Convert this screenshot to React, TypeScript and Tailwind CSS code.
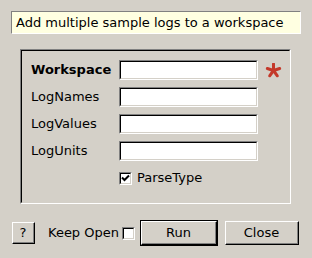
import React from "react";

const font = { fontFamily: '"DejaVu Sans", sans-serif' };

function Sunken({ w, h, children }: { w: number; h: number; children?: React.ReactNode }) {
  return (
    <div
      className="border-t border-l border-t-[#808080] border-l-[#808080] border-b border-r border-b-white border-r-white box-border"
      style={{ width: w, height: h }}
    >
      <div className="w-full h-full border-t border-l border-t-black border-l-black border-b border-r border-b-[#d4d0c8] border-r-[#d4d0c8] bg-white box-border">
        {children}
      </div>
    </div>
  );
}

function CheckBox({ checked }: { checked?: boolean }) {
  return (
    <div className="w-[13px] h-[13px] border-t border-l border-t-[#808080] border-l-[#808080] border-b border-r border-b-white border-r-white box-border">
      <div className="w-full h-full border-t border-l border-t-black border-l-black border-b border-r border-b-[#d4d0c8] border-r-[#d4d0c8] bg-white box-border flex items-center justify-center">
        {checked && (
          <svg width="9" height="9" viewBox="0 0 9 9">
            <path d="M1 3.5 L3.5 6 L8 1.5" stroke="black" strokeWidth="2" fill="none" />
          </svg>
        )}
      </div>
    </div>
  );
}

function Button({ w, h, children, def }: { w: number; h: number; children: React.ReactNode; def?: boolean }) {
  const inner = (
    <div className="w-full h-full border-t border-l border-t-white border-l-white border-b border-r border-b-black border-r-black box-border">
      <div className="w-full h-full border-b border-r border-b-[#808080] border-r-[#808080] box-border flex items-center justify-center text-[13px] text-black">
        {children}
      </div>
    </div>
  );
  if (def) {
    return (
      <div className="border border-black box-border" style={{ width: w, height: h }}>
        {inner}
      </div>
    );
  }
  return <div style={{ width: w, height: h }}>{inner}</div>;
}

function Star() {
  const cx = 8.5;
  const cy = 7.5;
  const r = 6.5;
  const angles = [-90, -18, 54, 126, 198];
  return (
    <svg width="17" height="15" viewBox="0 0 17 15">
      {angles.map((a) => {
        const rad = (a * Math.PI) / 180;
        return (
          <line
            key={a}
            x1={cx}
            y1={cy}
            x2={cx + r * Math.cos(rad)}
            y2={cy + r * Math.sin(rad)}
            stroke="#c4392a"
            strokeWidth="3"
            strokeLinecap="round"
          />
        );
      })}
    </svg>
  );
}

export default function App() {
  const rows: { label: string; bold?: boolean; star?: boolean }[] = [
    { label: "Workspace", bold: true, star: true },
    { label: "LogNames" },
    { label: "LogValues" },
    { label: "LogUnits" },
  ];
  return (
    <div className="w-[312px] h-[258px] bg-[#d4d0c8] overflow-hidden text-[13px] text-black" style={font}>
      <div className="pt-[11px] px-[11px]">
        <div className="h-[23px] bg-[#ffffe1] border-t border-l border-t-[#808080] border-l-[#808080] border-r border-b border-r-white border-b-white box-border flex items-center pl-[4px]">
          Add multiple sample logs to a workspace
        </div>
      </div>
      <div className="mt-[15px] ml-[20px] w-[271px] h-[155px] border-t border-l border-t-[#808080] border-l-[#808080] border-b border-r border-b-white border-r-white box-border">
        <div className="w-full h-full border-t border-l border-t-black border-l-black border-b border-r border-b-[#d4d0c8] border-r-[#d4d0c8] box-border pt-[9px] pl-[9px] flex flex-col gap-[7px]">
          {rows.map((r) => (
            <div key={r.label} className="flex items-center h-[20px]">
              <div className={"w-[88px] " + (r.bold ? "font-bold" : "")}>{r.label}</div>
              <Sunken w={139} h={20} />
              {r.star && (
                <div className="ml-[7px] mt-[1px]">
                  <Star />
                </div>
              )}
            </div>
          ))}
          <div className="flex items-center h-[20px] pl-[88px]">
            <CheckBox checked />
            <span className="ml-[5px]">ParseType</span>
          </div>
        </div>
      </div>
      <div className="flex items-center mt-[16px] pl-[12px] h-[26px]">
        <Button w={23} h={22}>?</Button>
        <span className="ml-[13px] w-[74px] whitespace-nowrap">Keep Open</span>
        <CheckBox />
        <div className="ml-[5px]">
          <Button w={78} h={26} def>
            Run
          </Button>
        </div>
        <div className="ml-[7px]">
          <Button w={74} h={24}>Close</Button>
        </div>
      </div>
    </div>
  );
}
